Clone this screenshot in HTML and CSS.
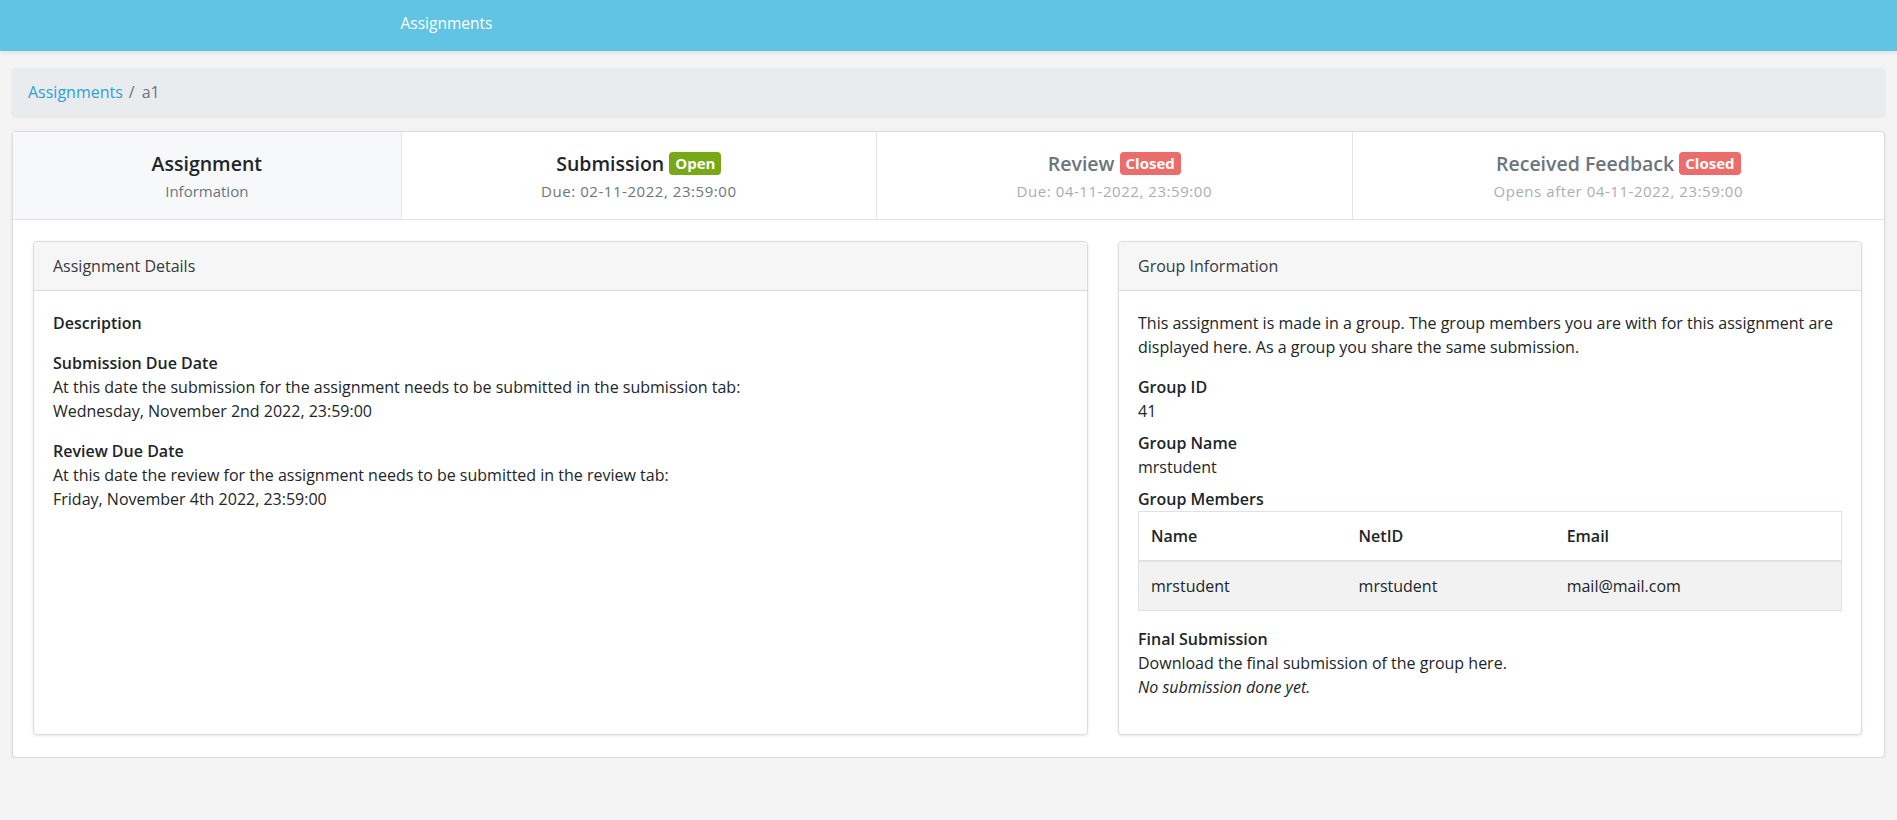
FILE: index.html
```html
<!DOCTYPE html>
<html lang="en">
<head>
<meta charset="utf-8">
<title>Assignments</title>
<link rel="stylesheet" href="styles.css">
</head>
<body>
<header class="topbar">
  <div class="topbar-inner"><a class="topbar-link">Assignments</a></div>
</header>
<main class="page">
  <nav class="crumbs">
    <a class="crumb-link">Assignments</a><span class="crumb-sep">/</span><span class="crumb-current">a1</span>
  </nav>
  <section class="panel">
    <div class="tabs">
      <div class="tab tab-active">
        <div class="tab-title">Assignment</div>
        <div class="tab-sub">Information</div>
      </div>
      <div class="tab">
        <div class="tab-title">Submission <span class="badge badge-open">Open</span></div>
        <div class="tab-sub tab-date">Due: 02-11-2022, 23:59:00</div>
      </div>
      <div class="tab tab-disabled">
        <div class="tab-title">Review <span class="badge badge-closed">Closed</span></div>
        <div class="tab-sub tab-date">Due: 04-11-2022, 23:59:00</div>
      </div>
      <div class="tab tab-disabled">
        <div class="tab-title">Received Feedback <span class="badge badge-closed">Closed</span></div>
        <div class="tab-sub tab-date">Opens after 04-11-2022, 23:59:00</div>
      </div>
    </div>
    <div class="panel-body">
      <div class="card">
        <div class="card-header">Assignment Details</div>
        <div class="card-body">
          <div class="block"><div class="label">Description</div></div>
          <div class="block">
            <div class="label">Submission Due Date</div>
            <div>At this date the submission for the assignment needs to be submitted in the submission tab:</div>
            <div>Wednesday, November 2nd 2022, 23:59:00</div>
          </div>
          <div class="block">
            <div class="label">Review Due Date</div>
            <div>At this date the review for the assignment needs to be submitted in the review tab:</div>
            <div>Friday, November 4th 2022, 23:59:00</div>
          </div>
        </div>
      </div>
      <div class="card">
        <div class="card-header">Group Information</div>
        <div class="card-body">
          <p class="intro">This assignment is made in a group. The group members you are with for this assignment are displayed here. As a group you share the same submission.</p>
          <dl class="facts">
            <dt>Group ID</dt>
            <dd>41</dd>
            <dt>Group Name</dt>
            <dd>mrstudent</dd>
            <dt>Group Members</dt>
          </dl>
          <table class="members">
            <thead>
              <tr><th class="col-name">Name</th><th class="col-net">NetID</th><th>Email</th></tr>
            </thead>
            <tbody>
              <tr><td>mrstudent</td><td>mrstudent</td><td>mail@mail.com</td></tr>
            </tbody>
          </table>
          <div class="label">Final Submission</div>
          <div>Download the final submission of the group here.</div>
          <p class="note">No submission done yet.</p>
        </div>
      </div>
    </div>
  </section>
</main>
</body>
</html>
```
FILE: styles.css
```css
* { box-sizing: border-box; }
html, body { margin: 0; }
body {
  background: #f4f4f4;
  font-family: "Open Sans", "Noto Sans", sans-serif;
  font-size: 16px;
  line-height: 24px;
  color: #212529;
}
.topbar {
  height: 51px;
  background: #62c4e3;
  box-shadow: 0 2px 4px rgba(0,0,0,0.08);
}
.topbar-inner {
  max-width: 1140px;
  margin: 0 auto;
  padding: 11px 22px 0;
}
.topbar-link {
  color: #fff;
  font-size: 15.5px;
}
.page {
  padding: 17px 12px 0 12px;
}
.crumbs {
  background: #e9ecef;
  border-radius: 4px;
  padding: 12px 16px;
  margin-bottom: 15px;
  box-shadow: 0 1px 3px rgba(0,0,0,0.08);
}
.crumb-link { color: #2f9fd6; }
.crumb-sep { color: #6c757d; padding: 0 7px 0 6px; }
.crumb-current { color: #6c757d; }
.panel {
  background: #fff;
  border: 1px solid #dcdcdc;
  border-radius: 4px;
  box-shadow: 0 1px 3px rgba(0,0,0,0.1);
}
.tabs {
  display: grid;
  grid-template-columns: 388fr 476fr 476fr 533fr;
  border-bottom: 1px solid #e2e5e8;
}
.tab {
  height: 87px;
  padding-top: 17px;
  text-align: center;
  border-left: 1px solid #e6e6e6;
}
.tab:first-child { border-left: 0; }
.tab-active { background: #f7f8fa; }
.tab-title {
  font-size: 19.5px;
  line-height: 30px;
  font-weight: 600;
  color: #212529;
}
.tab-sub {
  color: #6c757d;
  font-size: 15px;
  line-height: 24px;
}
.tab-date { letter-spacing: 0.55px; }
.tab-disabled .tab-title { color: #6c757d; }
.tab-disabled .tab-sub { color: #a9aeb3; }
.badge {
  display: inline-block;
  font-size: 15px;
  font-weight: 700;
  line-height: 1;
  padding: 4px 6px;
  border-radius: 4px;
  color: #fff;
  vertical-align: 2px;
  letter-spacing: 0;
}
.badge-open { background: #77a816; }
.badge-closed { background: #ec6b6b; }
.panel-body {
  display: grid;
  grid-template-columns: 1055fr 744fr;
  column-gap: 30px;
  padding: 21px 22px 22px 20px;
}
.card {
  border: 1px solid #dcdcdc;
  border-radius: 4px;
  background: #fff;
  box-shadow: 0 1px 3px rgba(0,0,0,0.1);
}
.card-header {
  background: #f6f6f6;
  border-bottom: 1px solid #dcdcdc;
  padding: 12px 19px;
  color: #343a40;
  border-radius: 4px 4px 0 0;
}
.card-body {
  padding: 20px 19px;
}
.block { margin-bottom: 16px; }
.label { font-weight: 600; }
.intro { margin: 0 0 16px; }
.facts { margin: 0; }
.facts dt { font-weight: 600; }
.facts dd { margin: 0 0 8px; }
.members {
  width: 100%;
  border-collapse: collapse;
  border: 1px solid #dee2e6;
  margin: 0 0 16px;
}
.members th, .members td {
  text-align: left;
  padding: 12px;
}
.members th { font-weight: 600; border-bottom: 2px solid #dee2e6; }
.members .col-name, .members .col-net { width: 29.6%; }
.members tbody tr { background: #f2f2f2; }
.note { font-style: italic; margin: 0 0 15px; }
```
